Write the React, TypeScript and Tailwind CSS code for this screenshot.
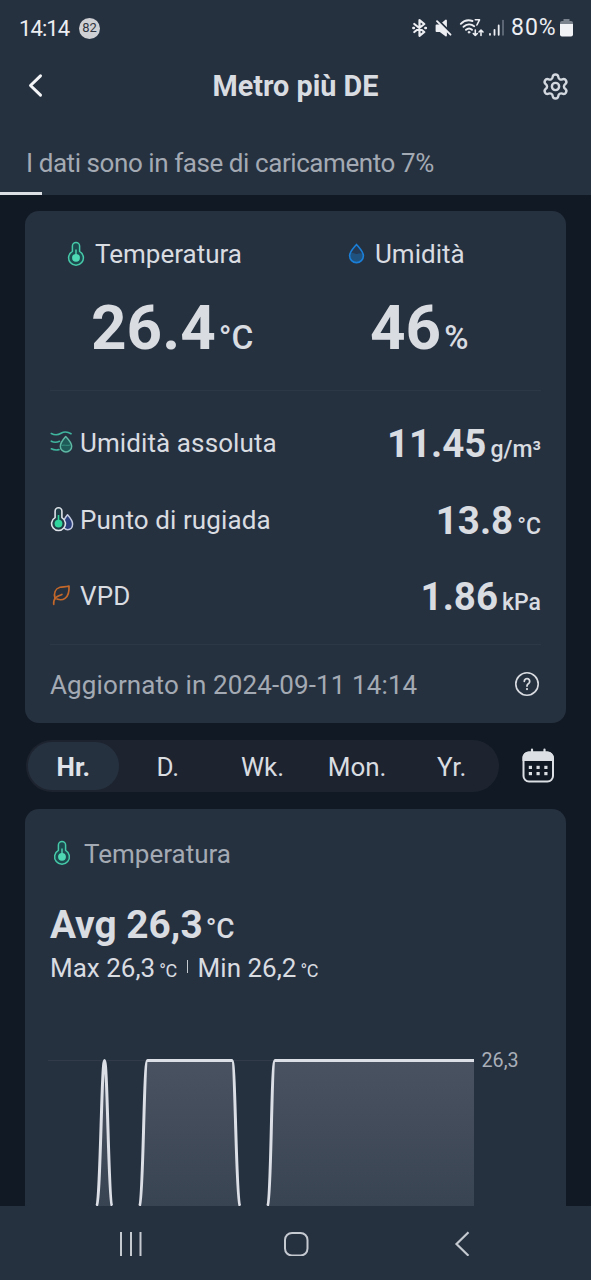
import React, { useState } from 'react'
import { Settings } from 'lucide-react'

function ThermometerIcon({ className }: { className?: string }) {
  return (
    <svg viewBox="0 0 18 26" className={className} fill="none">
      <path
        d="M5.4 5a3.6 3.6 0 0 1 7.2 0v5.400a7.400 7.400 0 1 1-7.200 0z"
        fill="#1c4a4e"
        stroke="#46c9a8"
        strokeWidth="1.5"
      />
      <circle cx="9" cy="16.800" r="3.900" fill="#4fd8b4" />
      <path d="M9 8.400v6" stroke="#4fd8b4" strokeWidth="1.400" />
    </svg>
  )
}

function DropIcon() {
  return (
    <svg viewBox="0 0 18 22" className="h-[22px] w-[18px]" fill="none">
      <path d="M9.500 1.400C7 4.400 2.600 8.600 2.600 12.700a6.900 6.900 0 0 0 13.800 0C16.400 8.600 12 4.400 9.500 1.400z" fill="#243a54" />
      <path d="M3 10.500c2.600-2 4.800 1.400 7.200.4 2-.8 3.400-.8 5.800-.2 1.300 5.200-2.300 8.400-6.500 8.400S1.800 15.500 3 10.500z" fill="#1f527f" />
      <path
        d="M9.500 1.400C7 4.400 2.600 8.600 2.600 12.700a6.900 6.900 0 0 0 13.800 0C16.400 8.600 12 4.400 9.500 1.400z"
        stroke="#1a7fd8"
        strokeWidth="1.600"
        strokeLinejoin="round"
      />
    </svg>
  )
}

function AbsoluteHumidityIcon() {
  return (
    <svg viewBox="0 0 24 24" className="h-6 w-6" fill="none" strokeLinecap="round" strokeLinejoin="round">
      <g stroke="#3fb59d" strokeWidth="1.600">
        <path d="M1.300 2.500C5 4.500 7.500 4.500 11 2.300c3.300-2 7-1.500 10 .4" />
        <path d="M1.300 10.200c2.500 1.300 5.200 1.400 8.200.1" />
        <path d="M1.300 17.800c2.500 1.200 4.700 1.500 7.700.8" />
      </g>
      <path
        d="M15.700 5.500c-2.400 2.700-5.400 6.300-5.400 9.800a5.700 5.700 0 0 0 11.400 0c0-3.500-3.400-7.100-6-9.800z"
        fill="#1d5a58"
        stroke="#5fb8a4"
        strokeWidth="1.500"
      />
      <path d="M12 14.500c2.500-1.500 4.500 1 8-.5" stroke="#2f8778" strokeWidth="1.200" />
    </svg>
  )
}

function DewPointIcon() {
  return (
    <svg viewBox="0 0 24 26" className="h-[26px] w-6" fill="none" strokeLinejoin="round">
      <path
        d="M17.500 7.800c-2 2.400-4.200 5.600-4.200 9.300 0 3.500 1.600 5.600 4.400 5.600s4.900-2.300 4.900-5.600c0-3.400-2.800-6.800-5.100-9.300z"
        fill="#2b3f7c"
        stroke="#c3cbe0"
        strokeWidth="1.500"
      />
      <path
        d="M5.100 4.200a3.400 3.400 0 0 1 6.800 0v6.400a6.900 6.900 0 1 1-6.800 0z"
        fill="#203c46"
        stroke="#dfe3e9"
        strokeWidth="1.600"
      />
      <circle cx="8.500" cy="16.600" r="3.900" fill="#2fd59c" />
      <path d="M8.500 8v6" stroke="#2fd59c" strokeWidth="1.600" />
    </svg>
  )
}

function LeafIcon() {
  return (
    <svg
      viewBox="0 0 24 24"
      className="h-6 w-6"
      fill="none"
      stroke="#c4682a"
      strokeWidth="1.700"
      strokeLinecap="round"
      strokeLinejoin="round"
    >
      <path d="M3.700 20.300c-.2-3 .3-5.100 2.200-6.800 1.700-1.600 3.600-1.800 6-3" />
      <path d="M5 14.300C3.500 9 5.500 4.600 10 3.300c2.800-.7 6-.3 9-1.300.3 5-.6 10-4 12.400-2.500 1.700-5.400 1.600-8 .6" />
    </svg>
  )
}

function HelpIcon() {
  return (
    <svg viewBox="0 0 26 26" className="mr-[1px] h-[26px] w-[26px]" fill="none" stroke="#d9dce1" strokeLinecap="round">
      <circle cx="13" cy="13" r="11.200" strokeWidth="1.600" />
      <path d="M10.300 10.300a2.700 2.700 0 1 1 4.300 2.200c-1 .7-1.600 1.200-1.600 2.500" strokeWidth="1.800" />
      <circle cx="13" cy="18.100" r=".5" strokeWidth="1.200" />
    </svg>
  )
}

function CalendarIcon() {
  return (
    <svg viewBox="0 0 34 36" className="h-9 w-[34px]" fill="none">
      <path d="M11 1.500v5M23.500 1.500v5" stroke="#dcdfe4" strokeWidth="2.200" strokeLinecap="round" />
      <rect x="2.500" y="4.500" width="29.500" height="29" rx="5.500" stroke="#dcdfe4" strokeWidth="2" />
      <path d="M1.500 13V9.500a6 6 0 0 1 6-6h19a6 6 0 0 1 6 6V13z" fill="#dcdfe4" />
      <g fill="#dcdfe4">
        <rect x="7.800" y="17.800" width="3.200" height="3.200" />
        <rect x="15.500" y="17.800" width="3.200" height="3.200" />
        <rect x="23.300" y="17.800" width="3.200" height="3.200" />
        <rect x="7.800" y="24" width="3.200" height="3.200" />
        <rect x="15.500" y="24" width="3.200" height="3.200" />
        <rect x="23.300" y="24" width="3.200" height="3.200" />
      </g>
    </svg>
  )
}

// Bluetooth, mute, wifi and signal glyphs, drawn as one strip
function StatusIcons() {
  return (
    <svg
      viewBox="410 16 94 24"
      className="h-6 w-[94px]"
      fill="none"
      stroke="#eceef2"
      strokeLinecap="round"
      strokeLinejoin="round"
    >
      <path d="m413.300 24 10 8-4.800 3.800V20.200l4.800 3.800-10 8" strokeWidth="2.200" />
      <path d="M412.300 28h.6M424.300 28h.6" strokeWidth="2.400" />
      <path d="M435.500 25.500h3.500l6-5v15l-6-4.500h-3.500z" fill="#eceef2" strokeWidth="1.800" />
      <path d="m437 20 14 14" stroke="#263140" strokeWidth="2.400" />
      <path d="m436 21.200 13.500 13.500" strokeWidth="1.900" />
      <path
        d="M459.800 23.800c3.200-3.300 7.500-4.200 11.700-2.800M462.500 26.800c3.200-2.800 7.500-3 10.700-.6M465 29.800c1.800-1.600 4.300-1.600 6 0"
        strokeWidth="1.900"
      />
      <circle cx="468" cy="32.200" r="1" fill="#eceef2" strokeWidth=".6" />
      <path d="M474.300 19.800h4.200l-2.600 5.200" strokeWidth="1.600" />
      <path d="M474.300 30v5.500m-2-2 2 2 2-2M480 35.500V30m-2 2 2-2 2 2" strokeWidth="1.600" />
      <path d="M489 33.800v1M493.500 29.800v5M497.700 25.500v9.300" strokeWidth="1.800" />
      <path d="M502 20.500v14.300" stroke="#66707d" strokeWidth="1.700" />
    </svg>
  )
}

const rows = [
  { icon: <AbsoluteHumidityIcon />, label: 'Umidità assoluta', value: '11.45', unit: 'g/m³' },
  { icon: <DewPointIcon />, label: 'Punto di rugiada', value: '13.8', unit: '°C' },
  { icon: <LeafIcon />, label: 'VPD', value: '1.86', unit: 'kPa' },
]

const ranges = ['Hr.', 'D.', 'Wk.', 'Mon.', 'Yr.']

function Header() {
  return (
    <header className="h-[195px] shrink-0 bg-[#263140]">
      <div className="flex h-14 items-center pl-[19px] pr-[18px]">
        <span className="w-[60px] text-[22px] tracking-[-0.9px] text-[#eceef2]">14:14</span>
        <span className="flex h-[21px] w-[21px] items-center justify-center rounded-full bg-[#cfd0d4] text-[13px] text-[#30363f]">
          82
        </span>
        <div className="ml-auto flex items-center">
          <StatusIcons />
          <span className="ml-[6px] w-[47px] text-[23px] tracking-[1px] text-[#eceef2]">80%</span>
          <svg viewBox="0 0 13 18" className="ml-[2px] h-[18px] w-[13px]">
            <path d="M3.500 0h6v2H11a2 2 0 0 1 2 2v3H0V4a2 2 0 0 1 2-2h1.500z" fill="#7b838e" />
            <path d="M0 5h13v10.500a2 2 0 0 1-2 2H2a2 2 0 0 1-2-2z" fill="#f1f2f5" />
          </svg>
        </div>
      </div>

      <div className="flex h-[60px] items-center justify-between pl-[27px] pr-[21px]">
        <button title="Indietro">
          <svg
            viewBox="0 0 16 26"
            className="h-[26px] w-4"
            fill="none"
            stroke="#f3f4f6"
            strokeWidth="3"
            strokeLinecap="round"
            strokeLinejoin="round"
          >
            <path d="M13.500 2.800 3.500 12.500l10 9.700" />
          </svg>
        </button>
        <h1 className="ml-[7px] pt-[2px] text-[28.8px] font-bold text-[#d9dde2]">Metro più DE</h1>
        <button title="Impostazioni">
          <Settings className="h-[29px] w-[29px] text-[#d3d8df]" strokeWidth={2} />
        </button>
      </div>

      <p className="h-[76px] pl-[26px] text-[26px] leading-[95px] tracking-[-0.43px] text-[#a4aab3]">
        I dati sono in fase di caricamento 7%
      </p>
      <div className="h-[3px] w-[42px] bg-[#dcdfe4]" />
    </header>
  )
}

function CurrentCard() {
  return (
    <section className="flex h-[512px] shrink-0 flex-col rounded-[14px] bg-[#263140] px-[25px] text-[#d9dce1]">
      <div className="flex pt-[23px]">
        <div className="w-[280px] pl-[17px]">
          <div className="flex h-10 items-center">
            <ThermometerIcon className="h-[26px] w-[18px]" />
            <span className="ml-[10px] text-[26px]">Temperatura</span>
          </div>
          <div className="mt-[14px] flex items-baseline pl-[24px] leading-[80px]">
            <span className="text-[62px] font-bold">26.4</span>
            <span className="ml-[3px] text-[33.500px] font-medium leading-none">°C</span>
          </div>
        </div>
        <div className="pl-[17px]">
          <div className="flex h-10 items-center">
            <DropIcon />
            <span className="ml-[10px] text-[26px]">Umidità</span>
          </div>
          <div className="mt-[14px] flex items-baseline pl-[23px] leading-[80px]">
            <span className="text-[62px] font-bold">46</span>
            <span className="ml-[3px] text-[33px] font-medium leading-none">%</span>
          </div>
        </div>
      </div>

      <div className="mt-[22px] h-px bg-[#2d3847]" />

      <div className="mt-[14px]">
        {rows.map((row) => (
          <div key={row.label} className="flex h-[76.500px] items-center">
            <div className="flex w-[30px] items-center">{row.icon}</div>
            <span className="text-[26px] leading-10 tracking-[0.1px]">{row.label}</span>
            <div className="ml-auto flex items-baseline pt-[2px] leading-[50px]">
              <span className="text-[38.500px] font-bold">{row.value}</span>
              <span className="ml-1 text-[23px] font-medium leading-none">{row.unit}</span>
            </div>
          </div>
        ))}
      </div>

      <div className="mt-[10px] h-px bg-[#2d3847]" />

      <div className="flex h-[80px] items-center justify-between">
        <span className="pt-[3px] text-[26px] tracking-[0.12px] text-[#a4aab3]">Aggiornato in 2024-09-11 14:14</span>
        <HelpIcon />
      </div>
    </section>
  )
}

function TemperatureChart() {
  return (
    <svg viewBox="25 1030 541 176" className="h-[176px] w-[541px]" fill="none">
      <defs>
        <linearGradient id="area" x1="0" y1="1060" x2="0" y2="1206" gradientUnits="userSpaceOnUse">
          <stop offset="0" stopColor="#495260" />
          <stop offset="1" stopColor="#394452" />
        </linearGradient>
      </defs>
      <path d="M48 1060.500h426" stroke="#313b4a" />
      <path
        d="M97 1206C100 1203 101 1061 104.500 1061S109 1203 112 1206zM140 1206c4-8 4-145 8-145h84c3 0 4 137 8 145zM268 1206c4-8 3-145 7-145h199v145z"
        fill="url(#area)"
      />
      <g stroke="#dcdfe6" strokeWidth="3" strokeLinejoin="round">
        <path d="M96.500 1206C100.500 1203 101.500 1060.500 104.500 1060.500S108.500 1203 112 1206" />
        <path d="M139.500 1206c4-4 4-145.500 8-145.500h84.500c3.500 0 4 141.500 8 145.500" />
        <path d="M267.500 1206c4-4 3.500-145.500 7.500-145.500h199" />
      </g>
      <text x="481.500" y="1067" fill="#a9afb8" fontSize="19.700">
        26,3
      </text>
    </svg>
  )
}

function ChartCard() {
  return (
    <section className="flex min-h-0 flex-1 flex-col rounded-t-[14px] bg-[#263140] text-[#d9dce1]">
      <div className="mt-6 flex h-10 items-center pl-[28px]">
        <ThermometerIcon className="h-[26px] w-[18px]" />
        <span className="ml-[13px] pt-[2px] text-[26px] text-[#a4aab3]">Temperatura</span>
      </div>
      <div className="mt-[27px] flex items-baseline pl-[25px] leading-[50px]">
        <span className="text-[38.800px] font-bold">Avg 26,3</span>
        <span className="ml-[3px] text-[28px] font-medium leading-none">°C</span>
      </div>
      <div className="flex items-baseline pl-[25px] text-[26px] leading-9">
        <span>Max 26,3</span>
        <span className="ml-1 text-[18px] leading-none tracking-[-0.5px]">°C</span>
        <span className="ml-[10px] h-[13px] w-px -translate-y-1 bg-[#c4c8cf]" />
        <span className="ml-[10px]">Min 26,2</span>
        <span className="ml-1 text-[18px] leading-none tracking-[-0.5px]">°C</span>
      </div>
      <div className="mt-auto">
        <TemperatureChart />
      </div>
    </section>
  )
}

function NavigationBar() {
  return (
    <nav className="flex h-[74px] shrink-0 items-center bg-[#263140] pb-[1px] pl-[118px] text-[#c5c9d0]">
      <svg viewBox="0 0 26 26" className="h-[26px] w-[26px]" stroke="currentColor" strokeWidth="2">
        <path d="M3 2v24M13 2v24M22.500 2v24" />
      </svg>
      <svg viewBox="0 0 26 26" className="ml-[139px] h-[26px] w-[26px]" fill="none" stroke="currentColor" strokeWidth="2">
        <rect x="2" y="3" width="22.500" height="22.500" rx="7" />
      </svg>
      <svg viewBox="0 0 16 26" className="ml-[145px] h-[26px] w-4" fill="none" stroke="currentColor" strokeWidth="2.200">
        <path d="M14.500 2.300 2.500 14l12 11.700" />
      </svg>
    </nav>
  )
}

export default function App() {
  const [range, setRange] = useState('Hr.')

  return (
    <div className="flex h-[1280px] w-[591px] flex-col overflow-hidden bg-[#111924] font-['Roboto',sans-serif]">
      <Header />

      <main className="flex min-h-0 flex-1 flex-col px-[25px] pt-4">
        <CurrentCard />

        <div className="my-[17px] ml-[1px] flex h-[52px] shrink-0 items-center">
          <div className="flex h-full w-[473px] rounded-full bg-[#1d242f]">
            {ranges.map((item) => (
              <button
                key={item}
                onClick={() => setRange(item)}
                className={`m-[2px] flex-1 rounded-full pt-[2px] text-[26px] ${
                  range === item ? 'bg-[#263140] font-bold text-[#dfe3e9]' : 'text-[#d9dce1]'
                }`}
              >
                {item}
              </button>
            ))}
          </div>
          <button className="ml-[22px]" title="Calendario">
            <CalendarIcon />
          </button>
        </div>

        <ChartCard />
      </main>

      <NavigationBar />
    </div>
  )
}
